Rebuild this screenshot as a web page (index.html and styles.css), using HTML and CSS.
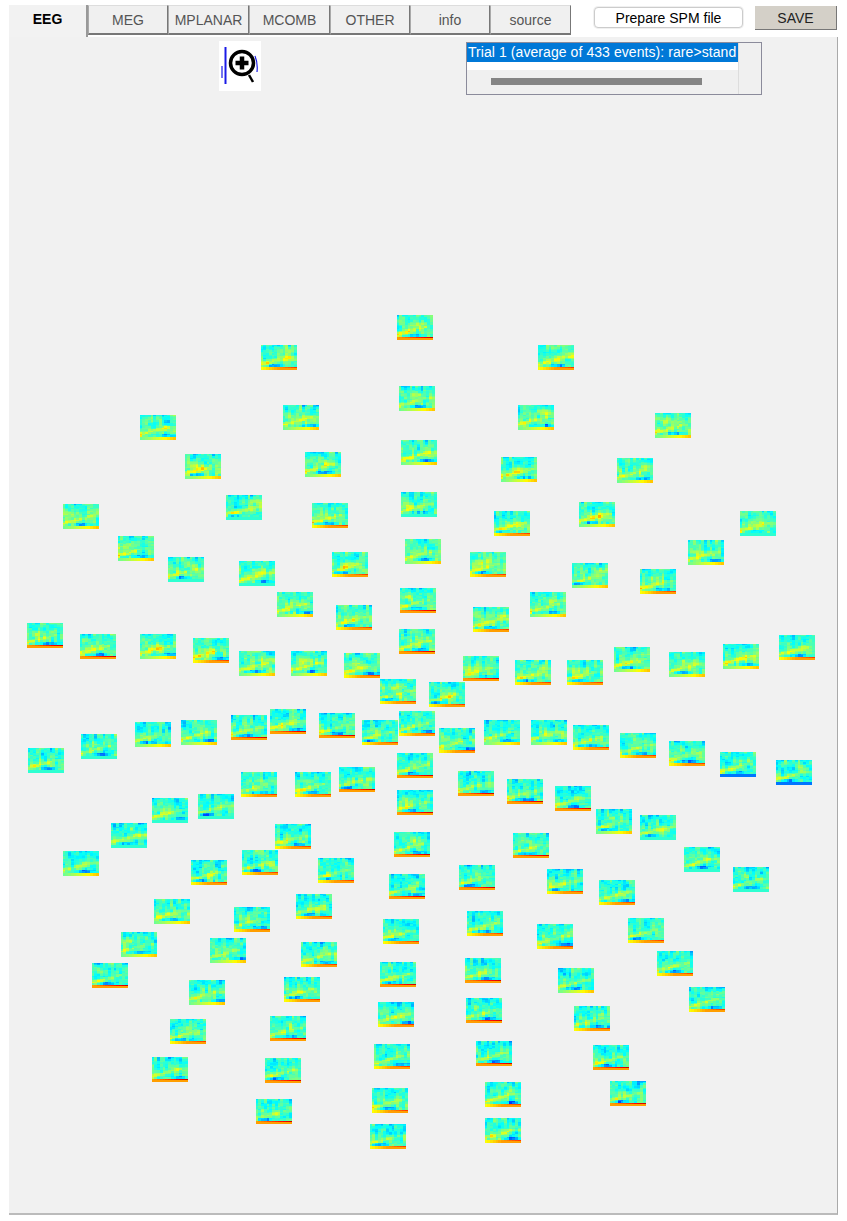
FILE: index.html
```html
<!DOCTYPE html>
<html>
<head>
<meta charset="utf-8">
<title>EEG</title>
<link rel="stylesheet" href="styles.css">
</head>
<body>
<div class="topbar">
	<div class="tabs">
		<a class="tab active eeg">EEG</a>
		<a class="tab">MEG</a>
		<a class="tab wide">MPLANAR</a>
		<a class="tab wide">MCOMB</a>
		<a class="tab">OTHER</a>
		<a class="tab">info</a>
		<a class="tab wide">source</a>
	</div>
	<button class="prepare">Prepare SPM file</button>
	<button class="save">SAVE</button>
</div>
<div class="panel" id="panel">
	<div class="zoomicon">
		<svg width="42" height="50" viewBox="0 0 42 50">
			<path d="M6.5 6V43" stroke="#1a1ae6" stroke-width="2" fill="none"/>
			<path d="M3 25V37M36 15Q39 22 38 31" stroke="#1a1ae6" stroke-width="1.2" fill="none"/>
			<circle cx="23" cy="22" r="11.5" stroke="#000" stroke-width="3.5" fill="none"/>
			<path d="M16.5 22H29.5M23 15.5V28.5" stroke="#000" stroke-width="4.5" fill="none"/>
			<path d="M30 34 34 41" stroke="#000" stroke-width="2.5" fill="none"/>
		</svg>
	</div>
	<div class="trials">
		<div class="trials-body">
			<div class="selected">Trial 1 (average of 433 events): rare&gt;stand</div>
			<div class="blank"></div>
			<div class="hscroll"><div class="hthumb"></div></div>
		</div>
		<div class="vscroll"></div>
	</div>
</div>
<script src="script.js"></script>
</body>
</html>
```

FILE: styles.css
```css
body {
  margin: 0;
  background-color: white;
  font-family: "Liberation Sans", Arial, sans-serif;
  font-size: 14px;
}

/* Tabs and the two buttons on the right */
.topbar {
  display: flex;
  align-items: flex-start;
  height: 37px;
  padding: 5px 0 0 9px;
  box-sizing: border-box;
}

.tabs {
  display: flex;
}

.tab {
  display: block;
  width: 80px;
  height: 30px;
  line-height: 29px;
  text-align: center;
  color: #555;
  background-color: #f0f0f0;
  border-right: 1px solid #777;
  border-bottom: 2px solid #777;
  border-left: 1px solid #aaa;
  border-top: 1px solid #ddd;
  box-sizing: border-box;
}

.tab.wide {
  width: 81px;
}

.tab.eeg {
  width: 79px;
}

.tab.active {
  height: 32px;
  font-weight: bold;
  color: black;
  border: none;
  border-right: 2px solid #999;
  background-color: #f2f2f2;
}

.prepare {
  width: 149px;
  height: 21px;
  margin: 2px 0 0 23px;
  padding: 0;
  font-family: inherit;
  font-size: 14px;
  color: black;
  background-color: white;
  border: 1px solid #ccc;
  border-radius: 4px;
  box-shadow: 0 0 0 1px #f0f0f0;
}

.save {
  width: 82px;
  height: 24px;
  margin: 1px 0 0 12px;
  padding: 0;
  font-family: inherit;
  font-size: 14px;
  color: #222;
  background-color: #d4d0c8;
  border: none;
  border-right: 1px solid #777;
  border-bottom: 1px solid #777;
}

/* Main area, the maps sit on it as on a free canvas */
.panel {
  position: relative;
  width: 829px;
  height: 1178px;
  margin-left: 9px;
  background-color: #f1f1f1;
  border-right: 1px solid #aaa;
  border-bottom: 2px solid #bbb;
  box-sizing: border-box;
}

.zoomicon {
  position: absolute;
  left: 210px;
  top: 4px;
  width: 42px;
  height: 50px;
  background-color: white;
}

.trials {
  position: absolute;
  left: 457px;
  top: 5px;
  width: 296px;
  height: 53px;
  display: flex;
  border: 1px solid #8b8b9b;
  box-sizing: border-box;
  background-color: #f0f0f0;
}

.trials-body {
  width: 271px;
}

.selected {
  height: 19px;
  line-height: 19px;
  padding-left: 1px;
  color: white;
  background-color: #0078d7;
  letter-spacing: 0.07px;
  white-space: nowrap;
  overflow: hidden;
}

.blank {
  height: 8px;
  background-color: white;
}

.hscroll {
  padding: 8px 0 0 24px;
}

.hthumb {
  width: 211px;
  height: 7px;
  background-color: #858585;
}

.vscroll {
  flex: 1;
  border-left: 1px solid #ddd;
}

.map {
  position: absolute;
  width: 36px;
  height: 25px;
}
```

FILE: script.js
```js
// left, top, strength of the stripe along the bottom of the map (0 blue .. 1 red)
var R = 0.92, O = 0.82, Y = 0.68, C = 0.42, B = 0.24;
var maps = [
	[397,315,R],[261,345,O],[538,345,O],[399,386,Y],[283,405,Y],[518,405,Y],[140,415,Y],[655,413,Y],
	[401,440,Y],[305,452,Y],[185,454,Y],[501,457,Y],[617,458,Y],[401,492,C],[226,495,C],[63,504,Y],
	[312,503,O],[579,502,Y],[494,511,O],[740,511,C],[118,536,Y],[405,539,Y],[332,552,O],[470,552,O],
	[688,540,Y],[168,557,C],[239,561,C],[572,563,Y],[640,569,O],[277,592,Y],[400,588,R],[530,592,Y],
	[336,605,O],[473,607,O],[399,629,R],[27,623,R],[80,634,R],[140,634,Y],[193,638,O],[239,651,Y],
	[291,651,Y],[344,653,O],[463,656,R],[515,660,O],[567,660,O],[614,647,Y],[669,652,Y],[723,644,Y],
	[779,635,O],[380,679,O],[429,682,O],[270,709,R],[231,715,R],[181,720,Y],[135,722,Y],[81,734,C],
	[28,748,C],[319,713,R],[362,720,O],[399,711,O],[439,728,O],[484,720,Y],[531,720,Y],[573,725,O],
	[620,733,O],[669,741,O],[720,752,B],[776,760,B],[397,753,R],[241,772,O],[295,772,O],[339,767,R],
	[458,771,R],[507,779,R],[555,786,R],[397,790,R],[152,798,C],[198,794,C],[596,809,Y],[640,815,C],
	[111,823,C],[275,824,O],[394,832,R],[513,833,R],[63,851,Y],[242,850,O],[191,860,O],[318,858,O],
	[684,847,C],[733,867,C],[389,874,R],[459,865,R],[547,869,O],[599,880,O],[154,899,Y],[296,894,O],
	[234,907,O],[383,919,O],[467,911,O],[537,924,O],[628,918,O],[121,932,Y],[210,938,Y],[301,942,O],
	[92,963,R],[380,962,R],[465,958,R],[558,968,Y],[657,951,O],[189,980,Y],[284,977,O],[689,987,O],
	[378,1002,O],[466,998,R],[574,1006,O],[170,1019,O],[270,1016,R],[593,1045,R],[374,1044,O],[476,1041,R],
	[152,1057,R],[265,1058,R],[610,1081,R],[372,1088,O],[485,1082,O],[256,1099,R],[370,1124,O],[485,1118,O]
];

var COLS = 13, ROWS = 17;
var panel = document.getElementById("panel");
var seed = 7;

function rnd() {
	seed = (seed * 16807) % 2147483647;
	return seed / 2147483647;
}

function jet(v) {
	var r = Math.min(4 * v - 1.5, -4 * v + 4.5);
	var g = Math.min(4 * v - 0.5, -4 * v + 3.5);
	var b = Math.min(4 * v + 0.5, -4 * v + 2.5);
	return "rgb(" + clamp(r) + "," + clamp(g) + "," + clamp(b) + ")";
}

function clamp(c) {
	return Math.round(Math.max(0, Math.min(1, c)) * 255);
}

// random grid, softened a little so the patches run together
function noiseGrid() {
	var raw = [], out = [];
	for (var r = 0; r < ROWS; r++) {
		raw.push([]);
		for (var c = 0; c < COLS; c++) {
			raw[r].push(rnd() - 0.5);
		}
	}
	for (var r = 0; r < ROWS; r++) {
		out.push([]);
		for (var c = 0; c < COLS; c++) {
			var up = raw[Math.max(r - 1, 0)][c], down = raw[Math.min(r + 1, ROWS - 1)][c];
			var up2 = raw[Math.max(r - 2, 0)][c], side = raw[r][Math.min(c + 1, COLS - 1)];
			out[r].push((raw[r][c] + up + down + up2 + side * 0.5) / 2.2);
		}
	}
	return out;
}

function drawMap(m) {
	var canvas = document.createElement("canvas");
	canvas.className = "map";
	canvas.width = 36;
	canvas.height = 25;
	canvas.style.left = (m[0] - 9) + "px";
	canvas.style.top = (m[1] - 37) + "px";
	panel.appendChild(canvas);
	var ctx = canvas.getContext("2d");

	var noise = noiseGrid();
	var blobX = 2 + rnd() * 9, blobY = 5 + rnd() * 5;
	var blueX = 2 + rnd() * 9;
	// maps in the lower half of the head run colder
	var low = m[1] > 700 ? 0.02 : 0;
	var warm = m[1] > 700 ? 0.06 : 0.1;

	var cw = 36 / COLS, ch = 25 / ROWS;
	for (var r = 0; r < ROWS; r++) {
		for (var c = 0; c < COLS; c++) {
			var y = r / (ROWS - 1), x = c / (COLS - 1);
			var v = 0.415 - low + y * 0.06 + noise[r][c] * 0.15;
			// warm patch in the middle of the map
			var d = (c - blobX) * (c - blobX) / 9 + (r - blobY) * (r - blobY) / 4;
			v += warm * Math.exp(-d);
			// yellow band rising on the left side
			if (r >= 8 && r <= 14) {
				v += 0.16 * Math.max(0, 1 - Math.abs(r - (13 - x * 6)) / 2) * (1 - x * 0.7);
			}
			// blue streak above the stripe
			if (r == 13 || r == 14) {
				v -= 0.16 * Math.exp(-(c - blueX) * (c - blueX) / 8);
			}
			// bottom stripe, strongest to the right
			if (r >= 15) {
				var s = m[2] - (1 - x) * (m[2] > 0.5 ? 0.2 : 0);
				v = r == 16 ? Math.min(s, 0.72) : s;
			}
			ctx.fillStyle = jet(v);
			ctx.fillRect(Math.floor(c * cw), Math.floor(r * ch), Math.ceil(cw) + 1, Math.ceil(ch) + 1);
		}
	}
}

for (var i = 0; i < maps.length; i++) {
	drawMap(maps[i]);
}
```
